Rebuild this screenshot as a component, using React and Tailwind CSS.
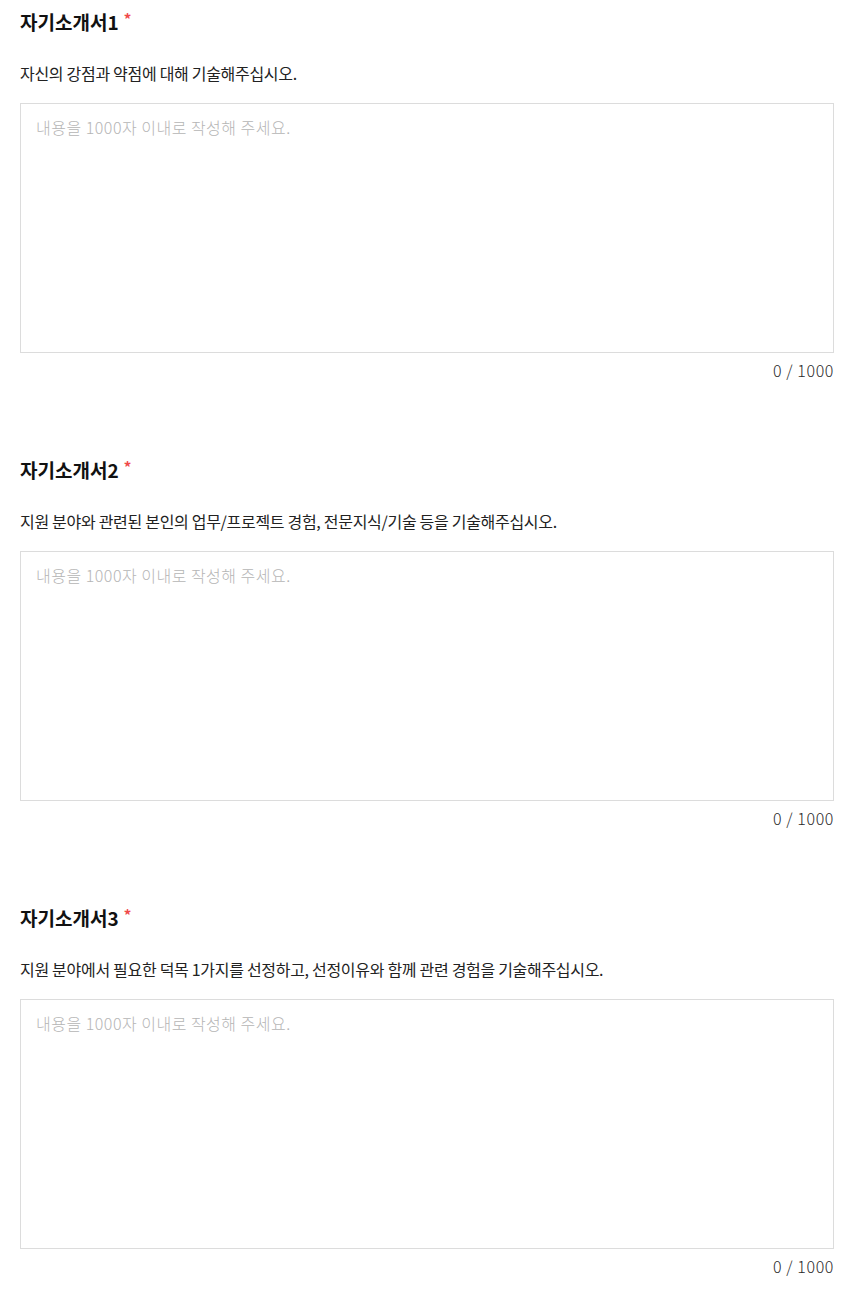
import React from "react";

const items = [
  { title: "자기소개서1", desc: "자신의 강점과 약점에 대해 기술해주십시오." },
  { title: "자기소개서2", desc: "지원 분야와 관련된 본인의 업무/프로젝트 경험, 전문지식/기술 등을 기술해주십시오." },
  { title: "자기소개서3", desc: "지원 분야에서 필요한 덕목 1가지를 선정하고, 선정이유와 함께 관련 경험을 기술해주십시오." },
];

export default function App() {
  return (
    <div
      className="w-[856px] bg-white pl-[20px] pr-[22px] pt-[9px] pb-[20px] text-[#222]"
      style={{ fontFamily: '"Noto Sans CJK KR", "Noto Sans", sans-serif' }}
    >
      {items.map((it, i) => (
        <section key={i} className={i > 0 ? "mt-[77px]" : ""}>
          <h2 className="flex items-start text-[19px] font-bold leading-[26px] text-[#111]">
            {it.title}
            <span className="ml-[5px] text-[15px] leading-[20px] text-[#f04a4a]">*</span>
          </h2>
          <p className="mt-[28px] text-[16px] leading-[20px] tracking-[-0.3px] text-[#222]">{it.desc}</p>
          <textarea
            className="mt-[20px] block h-[250px] w-full resize-none border border-[#dcdcdc] px-[15px] py-[12px] text-[16px] font-light leading-[22px] tracking-[0.5px] outline-none placeholder:text-[#b5b5b5]"
            placeholder="내용을 1000자 이내로 작성해 주세요."
          />
          <div className="mt-[7px] text-right text-[16px] font-light leading-[20px] tracking-[0.6px] text-[#2a2a2a]">0 / 1000</div>
        </section>
      ))}
    </div>
  );
}
